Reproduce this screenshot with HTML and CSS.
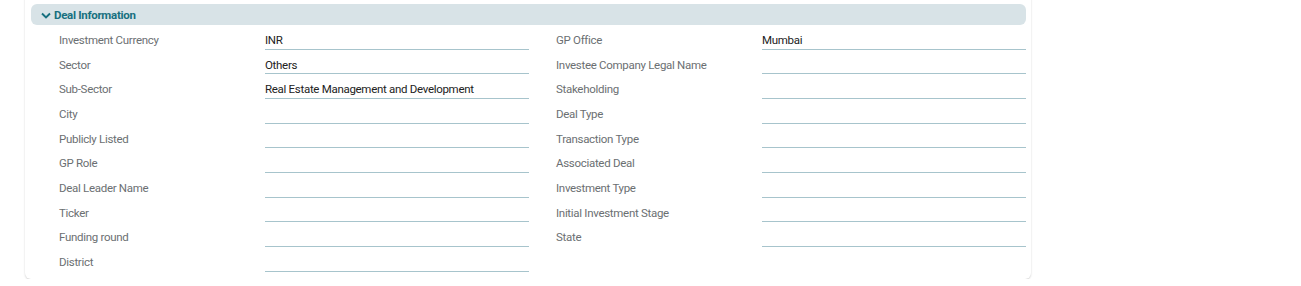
FILE: index.html
```html
<!DOCTYPE html>
<html lang="en">
<head>
    <meta charset="UTF-8">
    <meta name="viewport" content="width=device-width, initial-scale=1.0">
    <title>Deal Information</title>
    <link rel="stylesheet" href="styles.css">
</head>
<body>
    <div class="card">
        <div class="section-head">
            <svg class="chevron" width="10" height="7" viewBox="0 0 10 7"><path d="M1 1.5l4 4 4-4" fill="none" stroke="#17707f" stroke-width="1.9"/></svg>
            <span>Deal Information</span>
        </div>
        <div class="fields">
            <div class="field"><span class="label">Investment Currency</span><span class="value">INR</span></div>
            <div class="field"><span class="label">GP Office</span><span class="value">Mumbai</span></div>
            <div class="field"><span class="label">Sector</span><span class="value">Others</span></div>
            <div class="field"><span class="label">Investee Company Legal Name</span><span class="value"></span></div>
            <div class="field"><span class="label">Sub-Sector</span><span class="value">Real Estate Management and Development</span></div>
            <div class="field"><span class="label">Stakeholding</span><span class="value"></span></div>
            <div class="field"><span class="label">City</span><span class="value"></span></div>
            <div class="field"><span class="label">Deal Type</span><span class="value"></span></div>
            <div class="field"><span class="label">Publicly Listed</span><span class="value"></span></div>
            <div class="field"><span class="label">Transaction Type</span><span class="value"></span></div>
            <div class="field"><span class="label">GP Role</span><span class="value"></span></div>
            <div class="field"><span class="label">Associated Deal</span><span class="value"></span></div>
            <div class="field"><span class="label">Deal Leader Name</span><span class="value"></span></div>
            <div class="field"><span class="label">Investment Type</span><span class="value"></span></div>
            <div class="field"><span class="label">Ticker</span><span class="value"></span></div>
            <div class="field"><span class="label">Initial Investment Stage</span><span class="value"></span></div>
            <div class="field"><span class="label">Funding round</span><span class="value"></span></div>
            <div class="field"><span class="label">State</span><span class="value"></span></div>
            <div class="field"><span class="label">District</span><span class="value"></span></div>
        </div>
    </div>
</body>
</html>
```

FILE: styles.css
```css
body {
    font-family: Roboto, 'Liberation Sans', Arial, sans-serif;
    background-color: #fff;
    margin: 0;
    padding: 0 0 0 25px;
}
.card {
    width: 995px;
    margin-top: -4px;
    padding: 8px 5px 7px 6px;
    background-color: #fff;
    border-radius: 0 0 6px 6px;
    box-shadow: 0 1px 2px rgba(0, 0, 0, 0.18);
}
.section-head {
    display: flex;
    align-items: center;
    gap: 3px;
    height: 21px;
    padding-left: 10px;
    background-color: #d8e3e7;
    border-radius: 6px;
    color: #17707f;
    font-size: 11.5px;
    letter-spacing: -0.3px;
    font-weight: bold;
}
.chevron {
    margin-top: 1px;
}
.fields {
    display: grid;
    grid-template-columns: 470px 470px;
    column-gap: 27px;
    padding-left: 28px;
}
.field {
    display: grid;
    grid-template-columns: 206px 264px;
    height: 24.67px;
    font-size: 11.5px;
    letter-spacing: -0.3px;
}
.label {
    color: #6b6f72;
    padding-top: 8px;
}
.value {
    color: #222;
    padding-top: 8px;
    border-bottom: 1px solid #a7c4cc;
}
```
